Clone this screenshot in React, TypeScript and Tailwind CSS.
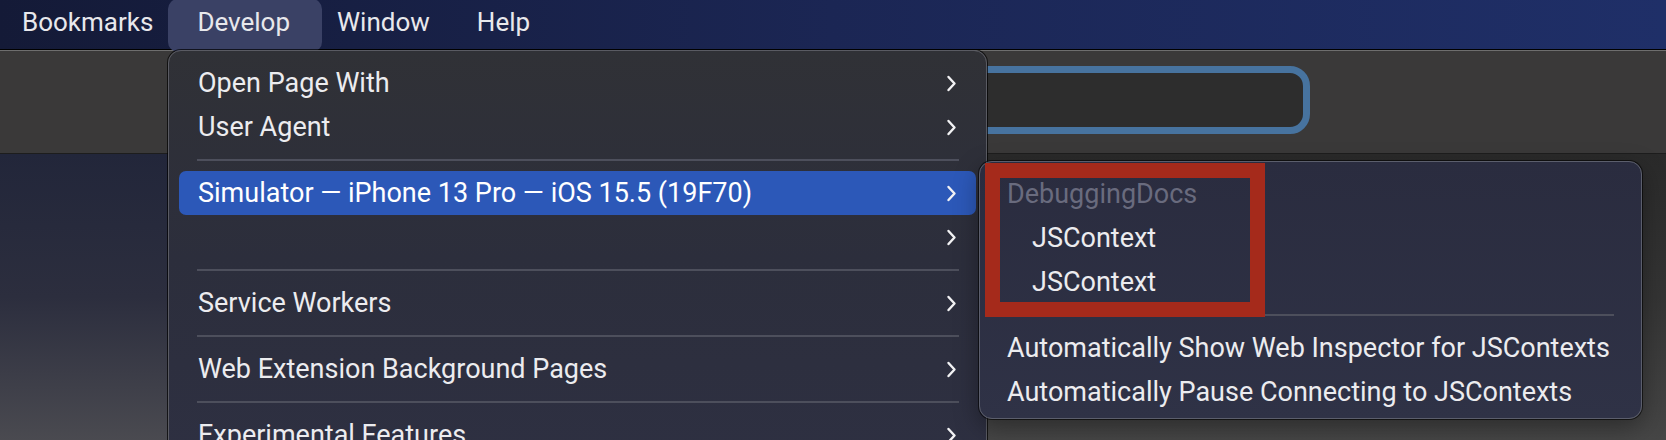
import React from "react";

type Item =
  | { kind: "item"; label: string; sub?: boolean; active?: boolean }
  | { kind: "sep" };

const developItems: Item[] = [
  { kind: "item", label: "Open Page With", sub: true },
  { kind: "item", label: "User Agent", sub: true },
  { kind: "sep" },
  { kind: "item", label: "Simulator — iPhone 13 Pro — iOS 15.5 (19F70)", sub: true, active: true },
  { kind: "item", label: "", sub: true },
  { kind: "sep" },
  { kind: "item", label: "Service Workers", sub: true },
  { kind: "sep" },
  { kind: "item", label: "Web Extension Background Pages", sub: true },
  { kind: "sep" },
  { kind: "item", label: "Experimental Features", sub: true },
];

function Chevron() {
  return (
    <svg width="11" height="17" viewBox="0 0 11 17" fill="none" className="shrink-0">
      <path
        d="M2.5 2 L8.5 8.5 L2.5 15"
        stroke="#f2f2f4"
        strokeWidth="2.4"
        strokeLinecap="round"
        strokeLinejoin="round"
      />
    </svg>
  );
}

function Separator({ inset = "mx-[18px]" }: { inset?: string }) {
  return <div className={`my-[10px] h-[2px] bg-[#4d4f5c] ${inset}`} />;
}

export default function App() {
  return (
    <div className="relative h-[440px] w-[1666px] overflow-hidden bg-[#2b2d3a] font-['Roboto','Liberation_Sans',sans-serif] text-[27px] text-[#ececef]">
      {/* macOS menu bar */}
      <div className="flex h-[49px] items-center bg-gradient-to-r from-[#141a37] via-[#1b2654] to-[#1f2f68] pl-[22px] text-[26px] text-[#e8e8ec]">
        <span className="pb-[4px]">Bookmarks</span>
        <span className="relative ml-[44px] pb-[4px]">
          <span className="absolute -left-[29px] -right-[32px] -top-[4px] bottom-[-6px] rounded-[10px] bg-[#3a4165]" />
          <span className="relative">Develop</span>
        </span>
        <span className="ml-[47px] pb-[4px]">Window</span>
        <span className="ml-[47px] pb-[4px]">Help</span>
      </div>
      <div className="h-px bg-black" />
      <div className="h-px bg-[#6e6e6e]" />

      {/* Safari toolbar */}
      <div className="flex h-[102px] items-center bg-[#3a3939] pb-[4px]">
        <div className="ml-[600px] h-[68px] w-[710px] rounded-[20px] border-[7px] border-[#47739f] bg-[#2d2d2d]" />
      </div>
      <div className="h-px bg-[#1d1d1d]" />

      {/* window content */}
      <div className="flex h-[286px]">
        <div className="w-[168px] bg-gradient-to-b from-[#22263a] via-[#2c2e3e] to-[#4a4a50]" />
        <div className="flex-1 bg-gradient-to-b from-[#2a2a2a] via-[#343434] to-[#464646]" />
      </div>

      {/* Develop menu */}
      <div className="absolute left-[168px] top-[50px] h-[420px] w-[819px] rounded-t-[13px] border border-[#5a5b63] bg-gradient-to-b from-[#303136] via-[#2c2e3c] to-[#2e3042] px-[10px] pt-[10px] shadow-[0_0_0_1px_rgba(0,0,0,0.7)]">
        {developItems.map((it, i) =>
          it.kind === "sep" ? (
            <Separator key={i} inset="ml-[18px] mr-[17px]" />
          ) : (
            <div
              key={i}
              className={`flex h-[44px] items-center justify-between rounded-[7px] pl-[19px] pr-[19px] ${
                it.active ? "bg-[#2c58b8] text-white" : ""
              }`}
            >
              <span className="truncate">{it.label}</span>
              {it.sub && <Chevron />}
            </div>
          )
        )}
      </div>

      {/* Simulator submenu */}
      <div className="absolute left-[979px] top-[161px] h-[258px] w-[663px] rounded-[13px] border border-[#5b5e6c] bg-gradient-to-b from-[#2a2c3f] to-[#2f3246] px-[10px] pt-[10px] shadow-[0_0_0_1px_rgba(0,0,0,0.6),0_8px_24px_rgba(0,0,0,0.35)]">
        <div className="flex h-[44px] items-center pl-[17px] text-[#696b7e]">DebuggingDocs</div>
        <div className="flex h-[44px] items-center pl-[42px]">JSContext</div>
        <div className="flex h-[44px] items-center pl-[42px]">JSContext</div>
        <Separator inset="ml-[17px] mr-[17px]" />
        <div className="flex h-[44px] items-center pl-[17px]">
          Automatically Show Web Inspector for JSContexts
        </div>
        <div className="flex h-[44px] items-center pl-[17px]">
          Automatically Pause Connecting to JSContexts
        </div>
      </div>

      {/* annotation box */}
      <div className="absolute left-[985px] top-[163px] h-[154px] w-[280px] border-[15px] border-[#a52a1b]" />
    </div>
  );
}
